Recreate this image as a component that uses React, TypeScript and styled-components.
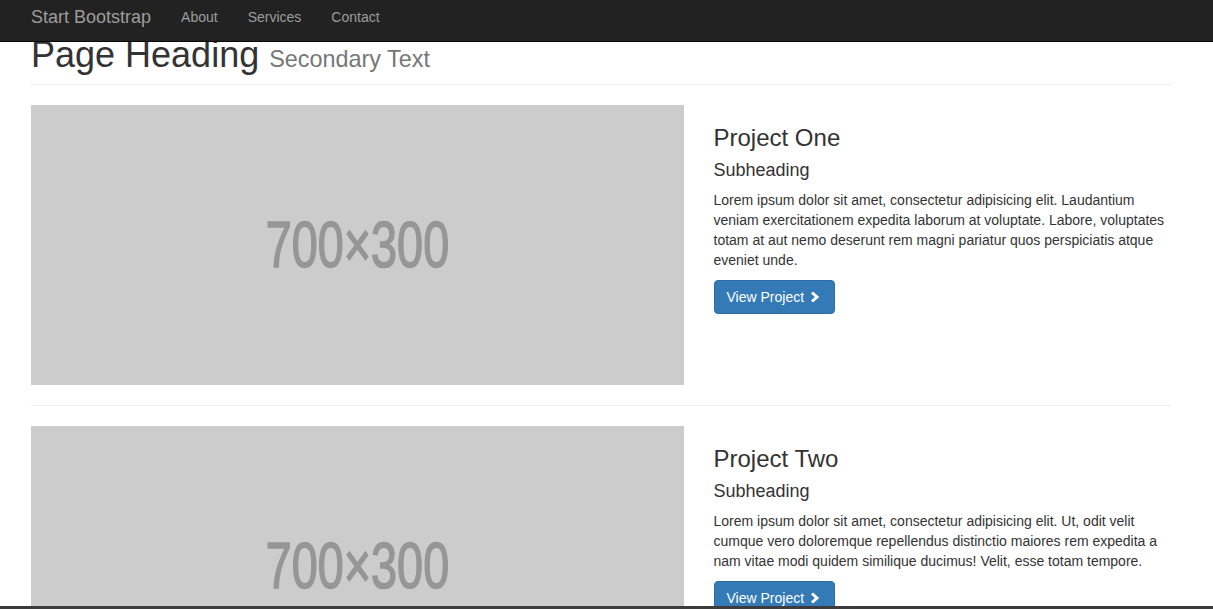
import styled, { createGlobalStyle } from "styled-components";

const GlobalStyle = createGlobalStyle`
  * { box-sizing: border-box; }
  html, body {
    margin: 0;
    padding: 0;
    overflow: hidden;
  }
  body {
    font-family: "Liberation Sans", Arial, Helvetica, sans-serif;
    font-size: 14px;
    line-height: 1.42857;
    color: #333;
    background: #fff;
  }
`;

const Navbar = styled.nav`
  position: fixed;
  top: 0;
  left: 0;
  right: 0;
  height: 42px;
  background: #222;
  border-bottom: 1px solid #080808;
  z-index: 10;
`;
const NavInner = styled.div`
  width: 1170px;
  margin-left: 16px;
  padding: 0 15px;
  display: flex;
`;
const Brand = styled.a`
  margin-left: -15px;
  padding: 7px 15px 0;
  font-size: 18px;
  line-height: 20px;
  color: #9d9d9d;
  text-decoration: none;
`;
const NavLink = styled.a`
  padding: 7px 15px 0;
  font-size: 14px;
  line-height: 20px;
  color: #9d9d9d;
  text-decoration: none;
`;

const Container = styled.div`
  width: 1170px;
  margin-left: 16px;
  padding: 0 15px;
`;
const PageHeader = styled.h1`
  margin: 35px 0 20px;
  padding-bottom: 9px;
  border-bottom: 1px solid #eee;
  font-size: 36px;
  font-weight: 500;
  line-height: 1.1;
  color: #333;
`;
const Small = styled.small`
  font-size: 65%;
  font-weight: 400;
  color: #777;
`;

const Row = styled.div`
  display: flex;
  margin: 0 -15px;
`;
const Col = styled.div<{ $span: number }>`
  width: ${(p) => (p.$span / 12) * 100}%;
  padding: 0 15px;
`;
const Placeholder = styled.div`
  height: 280px;
  background: #ccc;
  display: flex;
  align-items: center;
  justify-content: center;
  overflow: hidden;
`;
const PlaceholderText = styled.span`
  font-family: "Liberation Sans", Arial, sans-serif;
  font-size: 65px;
  line-height: 1;
  color: #969696;
  -webkit-text-stroke: 1.6px #969696;
  transform: scaleX(0.72);
  white-space: nowrap;
`;

const ProjectTitle = styled.h3`
  margin: 20px 0 10px;
  font-size: 24px;
  font-weight: 500;
  line-height: 1.1;
`;
const Subheading = styled.h4`
  margin: 10px 0;
  font-size: 18px;
  font-weight: 500;
  line-height: 1.1;
`;
const Text = styled.p`
  margin: 0 0 9px;
`;
const Button = styled.a`
  display: inline-flex;
  align-items: center;
  padding: 6px 12px;
  font-size: 14px;
  line-height: 20px;
  color: #fff;
  background: #337ab7;
  border: 1px solid #2e6da4;
  border-radius: 4px;
  text-decoration: none;
`;
const Chevron = styled.svg`
  margin-left: 6px;
  margin-right: 2px;
`;
const Divider = styled.hr`
  margin: 20px 0;
  border: 0;
  border-top: 1px solid #eee;
`;
const BottomEdge = styled.div`
  position: fixed;
  left: 0;
  right: 0;
  bottom: 0;
  height: 3px;
  background: #3c3c3c;
`;

const projects = [
  {
    title: "Project One",
    text: "Lorem ipsum dolor sit amet, consectetur adipisicing elit. Laudantium veniam exercitationem expedita laborum at voluptate. Labore, voluptates totam at aut nemo deserunt rem magni pariatur quos perspiciatis atque eveniet unde.",
  },
  {
    title: "Project Two",
    text: "Lorem ipsum dolor sit amet, consectetur adipisicing elit. Ut, odit velit cumque vero doloremque repellendus distinctio maiores rem expedita a nam vitae modi quidem similique ducimus! Velit, esse totam tempore.",
  },
];

function App() {
  return (
    <>
      <GlobalStyle />
      <Navbar>
        <NavInner>
          <Brand href="#">Start Bootstrap</Brand>
          <NavLink href="#">About</NavLink>
          <NavLink href="#">Services</NavLink>
          <NavLink href="#">Contact</NavLink>
        </NavInner>
      </Navbar>
      <Container>
        <PageHeader>
          Page Heading <Small>Secondary Text</Small>
        </PageHeader>
        {projects.map((project, index) => (
          <div key={index}>
            <Row>
              <Col $span={7}>
                <Placeholder>
                  <PlaceholderText>700×300</PlaceholderText>
                </Placeholder>
              </Col>
              <Col $span={5}>
                <ProjectTitle>{project.title}</ProjectTitle>
                <Subheading>Subheading</Subheading>
                <Text>{project.text}</Text>
                <Button href="#">
                  View Project
                  <Chevron width="10" height="12" viewBox="0 0 10 12">
                    <polyline
                      points="2,1.5 7,6 2,10.5"
                      fill="none"
                      stroke="#fff"
                      strokeWidth="3"
                    />
                  </Chevron>
                </Button>
              </Col>
            </Row>
            <Divider />
          </div>
        ))}
      </Container>
      <BottomEdge />
    </>
  );
}

export default App;
